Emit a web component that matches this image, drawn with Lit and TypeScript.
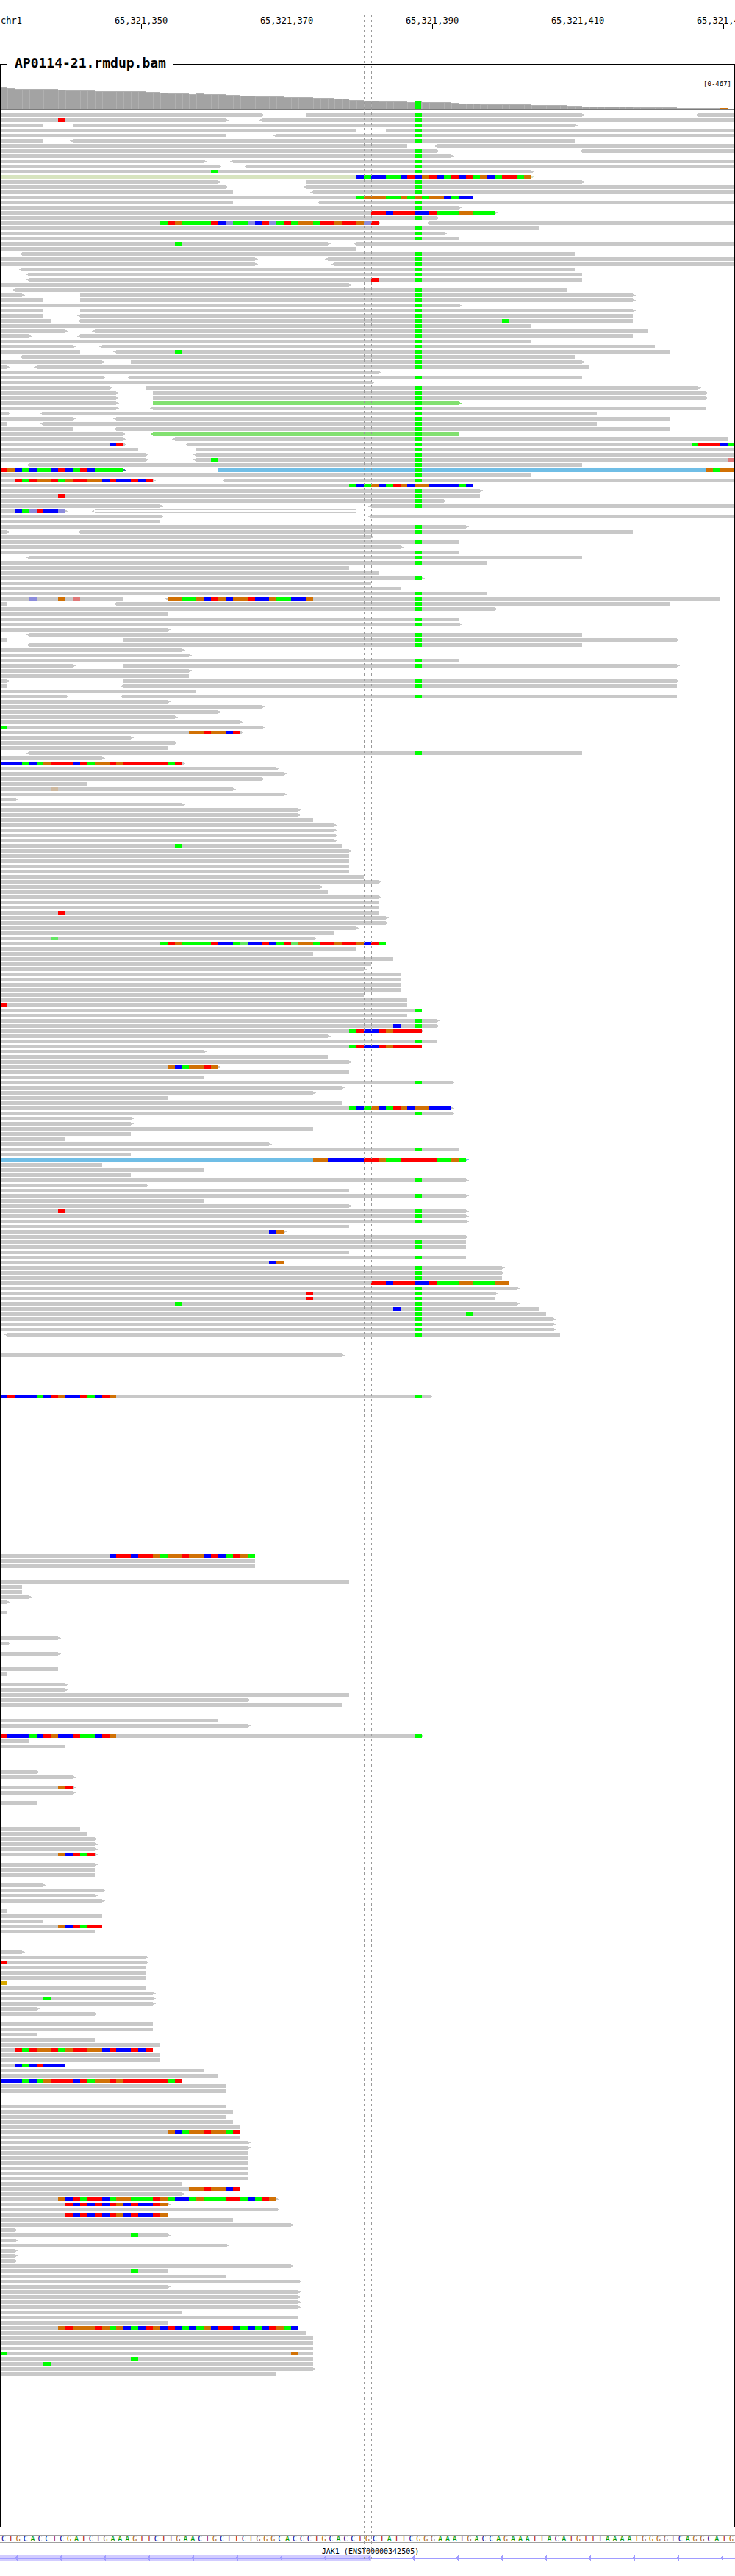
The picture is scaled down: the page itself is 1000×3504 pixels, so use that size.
import { LitElement, html, svg, css } from "lit";
import { customElement, property, state } from "lit/decorators.js";

/** Number of bases that fit across the window. */
const VISIBLE_BASES = 1000 / 9.9;
const ROW_PITCH = 7;
const READ_HEIGHT = 5;
const TOP_GAP = 5;

const SEQUENCE =
  "CTGCACCTCGATCTGAAAGTTCTTGAACTGCTTCTGGGCACCCTGCACCT" +
  "GCTATTCGGGAAATGACCAGAAATTACATGTTTAAAATGGGGTCAGGCATG";

const TICKS = [
  { base: 19, label: "65,321,350" },
  { base: 39, label: "65,321,370" },
  { base: 59, label: "65,321,390" },
  { base: 79, label: "65,321,410" },
  { base: 99, label: "65,321,430" },
];

/** Coverage as [number of bases, bar height in pixels]. */
const COVERAGE: [number, number][] = [
  [1, 29], [1, 28], [6, 27], [1, 26], [4, 25], [7, 24], [2, 23], [1, 22],
  [3, 21], [1, 20], [1, 21], [3, 20], [2, 19], [2, 18], [4, 17], [4, 16],
  [3, 15], [2, 14], [2, 12], [2, 11], [4, 10], [1, 9], [1, 10], [4, 9],
  [1, 8], [3, 7], [7, 6], [5, 5], [2, 4], [7, 3], [6, 2], [7, 1],
];

const SNP_BASE = 57;

/** Lower case letters are base calls of low quality. */
const BASE_COLORS: Record<string, string> = {
  A: "#00ff00", C: "#0000ff", G: "#d17105", T: "#ff0000",
  a: "#64e664", c: "#8c8cdc", g: "#cdb89f", t: "#e07878",
};

const READ_COLORS: Record<string, string> = {
  "": "#c8c8c8", o: "#d7e4bf", g: "#82e070", s: "#70bee6", b: "#3f6f9f", y: "#d8a800",
};

/**
 * One line per row of the pileup.
 *   [<]start-end[>][color]  a read; < or > is its strand arrow, h is hollow
 *   position:BASES          mismatching bases
 *   *                       an A at the SNP position
 *   @n                      jumps to row n
 *   line xN                 the line is repeated N times
 */
const PILEUP = `
0-36> 42-80> <96-102 *
0-31> <36-102 * 8:T
0-6 10-79> *
0-49 53-102 *
0-31 <38-102 *
0-6 <10-79 *
0-56 <60-102
0-60> <80-102 *
0-62> *
0-28> <32-102 *
0-30> <34-102 *
0-73> * 29:A
0-73>o 49:CACCAACTCGTCATCTAGCATTAG
0-30> 42-80> *
0-31> <42-102 *
0-32 <43-102 *
0-65 49:AGGGAAGAGAGGCACC
0-32 <44-102 *
0-63> *
0-68> 51:TTCTTTCCTAAAGGAAA
0-60> *
0-52> <59-102 22:ATGAAAATCcAAcCTcATAGGATTGTTGcT
0-74 *
0-61> *
0-63 *
0-45> <49-102 24:A
0-49
<3-79 *
0-35> <45-102 *
0-35> <46-102 *
<3-79 *
<4-80 *
<4-80 * 51:T
0-48>
<2-78 *
0-3> 11-87> *
0-6 11-87> *
0-63> *
0-6 11-87> *
0-6 <11-87 *
0-7 <11-87 * 69:A
0-73 *
0-9> <13-89 *
0-4> <11-87 *
0-73 *
0-10> <14-90 *
0-11 <16-92 * 24:A
<3-79 *
0-14> 18-80> *
0-1> <5-81 *
0-52>
0-14> <18-80 *
0-51>
0-15> 20-96> *
0-16> 21-97> * x2
0-16> 21-63>g *
0-16> <21-97 *
0-1> <6-82 *
0-10> <16-92 *
0-1 <6-82 *
0-10 <16-92 *
0-17> <21-63g *
0-17> <24-100 *
0-17> <26-102 * 15:CT 95:ATTTCAA
0-19 27-102 *
0-20> <27-102 *
0-20> <27-102 * 29:A 100:tt
<4-80 *
0-17>b 30-102s * 0:TGCACAACTCATCAAAA 97:GAGGG
0-73 *
0-21> <31-102 * 2:TATGGTAGTTGGCTCCTCT
0-65 48:ACAGCATGCGGCCCCAC
0-66> *
0-66 * 8:T
0-61> *
0-22> <51-102 *
0-9> <13-49h 2:CAcTCCc
0-22> <51-102
0-22
0-64> *
0-1> <11-87 *
0-51>
0-63 *
0-55>
0-63 *
<4-80 *
0-67 *
0-48
0-52
0-58> *
0-51
0-55
0-67 *
0-17 <23-99 * 4:c 8:G 10:t 23:GGAAGCTGCGGTCCGAACCG
0-1 <16-92 *
0-68> *
0-23
0-63 *
0-63> *
0-23>
<4-80 *
0-1 17-93> *
<4-80 *
0-25>
0-26>
0-63 *
0-10> 17-93> *
0-26>
0-26
0-1> 17-93> *
0-1 <17-93 *
0-27
0-9> <17-93 *
0-23>
0-36>
0-30>
0-24>
0-33>
0-36> 0:A
0-33> 26:GGTGGCT
0-18>
0-24>
0-23
<4-80 *
0-14>
0-25> 0:CCCACAGTTTCTAGGTGTTTTTTAT
0-38>
0-39>
0-36>
0-12
0-32> 7:g
0-39>
0-2>
0-25>
0-41> x2
0-43
0-46> x4
0-47 24:A
0-48>
0-48 x4
0-50
0-52>
0-44>
0-45
0-52>
0-52 x2
0-52 8:T
0-53> x2
0-49>
0-46
0-43> 7:a
0-53 22:ATGAAAATCCAaCCTCATaGGATTGTTGCTA
0-49
0-43
0-54
0-51
0-50>
0-55 x4
0-50
0-56
0-56 0:T
0-58 *
0-56
0-60> *
0-60> * 54:C
0-58> 48:ATCCTGTTTT
0-45>
0-60 *
0-58 48:ATCCTGTTTT
0-28>
0-45
0-48>
0-30> 23:GCAGGTG
0-48
0-28
0-62> *
0-47>
0-43>
0-23
0-47
0-62> 48:ACAGCATGCGGCCC
0-62> *
0-18> x2
0-43
0-18
0-9
0-37>
0-63 *
0-18
0-64>s 43:GGCCCCCTTGAATTTTTAAGA
0-14
0-28
0-18
0-64> *
0-20>
0-48
0-64> *
0-28
0-48>
0-64> * 8:T
0-64> * x2
0-48
0-39> 37:CG
0-64>
0-64 * x2
0-48
0-64 *
0-39 37:CG
0-69> * x2
0-69 *
0-70 51:TTCTTTCCTAAAGGAAAGG
0-71> *
0-68> * 42:T
0-68 * 42:T
0-71> * 24:A
0-74 * 54:C
0-75 * 64:A
0-76> * x3
<1-77 *
@241 0-47>
@249 0-59> * 0:CTCCCACTGCCTACTG
@280 0-35 15:CTTCTTGAGGTGGCTCATGA
0-35 x2
@285 0-48
0-3 x2
0-4>
0-1>
@291 0-1
@296 0-8>
0-1>
@299 0-8>
@302 0-8
0-1
@305 0-9> x2
0-48
0-34>
0-47
@312 0-30
0-34>
@315 0-58> * 0:TCCCACTGCCTAACTG
0-4
0-9
@322 0-5>
0-10>
@325 0-10> 8:GT
0-10>
@328 0-5
@333 0-11
0-12
0-13> x3
0-13> 8:GCTAT
@340 0-13>
0-13 x2
@344 0-6>
0-14>
0-13>
0-14>
@349 0-1
0-14
0-6
0-14 8:GCTATT
0-13
@357 0-3>
0-20>
0-20> 0:T
0-20 x3
0-1y
0-20
0-21>
0-21> 6:A
0-21>
0-5>
0-13>
@371 0-21 x2
0-5
0-13
0-22
0-21 2:TATGGTAGTTGGCTCCTCT
0-22 x2
0-9 2:CACTCCC
0-28
0-30
0-25 0:CCCACAGTTTCTAGGTGTTTTTTAT
0-31 x2
@387 0-31
0-32
0-31
0-32
0-33
0-33 23:GCAGGTGGAT
0-33
0-34> x2
0-34 x6
0-25
0-33 26:GGTGGCT
0-25>
0-38> 8:GCTATTCAGGAAATGACCAGAAATTACATG
0-23> 9:TCTCTCTGCTCCTG
0-38>
0-23 9:TCTCTCTGCTCCTG
0-32
0-40>
0-2>
0-23> 18:A
0-2>
0-31>
0-2> x3
0-40>
0-23 18:A
0-31
0-41>
0-23>
0-41> x4
0-25
0-41
0-23
0-41 8:GTGGGTGAGCACTGCTCACAGCTTCACACTGAC
0-42
0-43 x3
0-43 0:A 40:G
0-43 18:A
0-43 6:A
0-43>
0-38
`;

interface Read {
  start: number;
  end: number;
  left: boolean;
  right: boolean;
  color: string;
  hollow: boolean;
}

interface Row {
  index: number;
  reads: Read[];
  mismatches: { pos: number; base: string }[];
}

function parsePileup(source: string): Row[] {
  const rows: Row[] = [];
  let index = 0;
  for (const line of source.trim().split("\n")) {
    const reads: Read[] = [];
    const mismatches: { pos: number; base: string }[] = [];
    let repeat = 1;
    for (const token of line.split(" ")) {
      if (token.startsWith("@")) index = Number(token.slice(1));
      else if (token.startsWith("x")) repeat = Number(token.slice(1));
      else if (token === "*") mismatches.push({ pos: SNP_BASE, base: "A" });
      else if (token.includes(":")) {
        const [pos, bases] = token.split(":");
        [...bases].forEach((base, i) => mismatches.push({ pos: Number(pos) + i, base }));
      } else {
        const m = /^(<?)(\d+)-(\d+)(>?)([a-z]?)$/.exec(token)!;
        reads.push({
          start: Number(m[2]),
          end: Number(m[3]),
          left: m[1] !== "",
          right: m[4] !== "",
          color: READ_COLORS[m[5]] ?? READ_COLORS[""],
          hollow: m[5] === "h",
        });
      }
    }
    for (let i = 0; i < repeat; i++) rows.push({ index: index++, reads, mismatches });
  }
  return rows;
}

const ROWS = parsePileup(PILEUP);

/** Pixel position of the left edge of a base. */
const scaleFor = (width: number) => (base: number) =>
  Math.round((base * width) / VISIBLE_BASES);

@customElement("genome-ruler")
class GenomeRuler extends LitElement {
  @property({ type: Number }) width = 1000;

  static styles = css`
    :host { display: block; padding-top: 20px; }
    svg { display: block; width: 100%; height: 20px; overflow: hidden; }
    text { font: 12px "DejaVu Sans Mono", monospace; fill: #000; }
    .middle { text-anchor: middle; }
    rect { shape-rendering: crispEdges; }
  `;

  render() {
    const x = scaleFor(this.width);
    return html`<svg role="img" aria-label="Position on chr1">
      <text x="1" y="12">chr1</text>
      ${TICKS.map((t) => {
        const px = x(t.base + 0.5) - 1;
        return svg`<text class="middle" x=${px} y="12">${t.label}</text>
          <rect x=${px} y="12" width="1" height="7"></rect>`;
      })}
      <rect x="0" y="19" width="100%" height="1"></rect>
    </svg>`;
  }
}

@customElement("coverage-plot")
class CoveragePlot extends LitElement {
  @property({ type: Number }) width = 1000;

  static styles = css`
    :host { display: block; }
    svg { display: block; width: 100%; height: 30px; shape-rendering: crispEdges; }
    .edge { fill: #b0b0b0; }
    .bar { fill: #a3a3a3; }
    .snp { fill: #00ff00; }
    .mixed { fill: #d17105; }
    .axis { fill: #7a7a7a; }
  `;

  render() {
    const x = scaleFor(this.width);
    const heights = COVERAGE.flatMap(([n, h]) => Array<number>(n).fill(h));
    return html`<svg aria-hidden="true">
      <g transform="translate(-1 0)">
        ${heights.map((h, i) => {
          const left = x(i);
          const w = x(i + 1) - left;
          if (i === SNP_BASE) {
            return svg`<rect class="edge" x=${left} y=${29 - h} width=${w} height=${h}></rect>
              <rect class="snp" x=${left} y=${29 - h} width=${w - 1} height=${h}></rect>`;
          }
          return svg`<rect class="edge" x=${left} y=${29 - h} width=${w} height=${h}></rect>
            <rect class="bar" x=${left + 1} y=${30 - h} width=${w - 1} height=${h - 1}></rect>`;
        })}
        <rect class="axis" x="0" y="29" width="101%" height="1"></rect>
        <rect class="mixed" x=${x(99)} y="28" width=${x(1)} height="1"></rect>
      </g>
    </svg>`;
  }
}

@customElement("read-pileup")
class ReadPileup extends LitElement {
  @property({ type: Number }) width = 1000;

  static styles = css`
    :host { display: block; padding-bottom: 203px; }
    svg { display: block; width: 100%; overflow: hidden; shape-rendering: crispEdges; }
    .hollow { fill: #fff; }
  `;

  private read(r: Read, y: number, x: (b: number) => number) {
    const a = x(r.start);
    const b = x(r.end);
    const left = r.left
      ? svg`<path fill=${r.color} d="M${a} ${y + 1}h-2v1h-2v1h2v1h2z"></path>`
      : null;
    const right = r.right
      ? svg`<path fill=${r.color} d="M${b} ${y + 1}h2v1h2v1h-2v1h-2z"></path>`
      : null;
    const core = r.hollow
      ? svg`<rect class="hollow" x=${a - 1} y=${y + 1} width=${b - a} height=${READ_HEIGHT - 2}></rect>`
      : null;
    return svg`${left}${right}
      <rect fill=${r.color} x=${a} y=${y} width=${b - a} height=${READ_HEIGHT}></rect>${core}`;
  }

  render() {
    const x = scaleFor(this.width);
    const height = TOP_GAP + (ROWS[ROWS.length - 1].index + 1) * ROW_PITCH;
    return html`<svg height=${height} role="img" aria-label="Aligned reads">
      <g transform="translate(-1 0)">
        ${ROWS.map((row) => {
          const y = TOP_GAP + row.index * ROW_PITCH;
          return svg`<g>
            ${row.reads.map((r) => this.read(r, y, x))}
            ${row.mismatches.map(
              (m) => svg`<rect fill=${BASE_COLORS[m.base]} x=${x(m.pos)} y=${y}
                width=${x(m.pos + 1) - x(m.pos)} height=${READ_HEIGHT}></rect>`
            )}
          </g>`;
        })}
      </g>
    </svg>`;
  }
}

@customElement("reference-sequence")
class ReferenceSequence extends LitElement {
  static styles = css`
    :host {
      display: grid;
      grid-template-columns: repeat(101, minmax(0, 1fr));
      height: 9px;
      border-top: 1px solid #a0a0a0;
      border-bottom: 1px solid #a0a0a0;
      font: 10px/9px "DejaVu Sans Mono", monospace;
      text-align: center;
    }
    .A { color: #009600; }
    .C { color: #000096; }
    .G { color: #a85a00; }
    .T { color: #a80000; }
  `;

  render() {
    return [...SEQUENCE].map((b) => html`<span class=${b}>${b}</span>`);
  }
}

@customElement("gene-track")
class GeneTrack extends LitElement {
  @property({ type: Number }) width = 1000;

  static styles = css`
    :host { display: block; }
    svg { display: block; width: 100%; height: 45px; shape-rendering: crispEdges; overflow: hidden; }
    text { font: 10px "DejaVu Sans Mono", monospace; text-anchor: middle; }
    .exon { fill: #d2ccff; }
    .intron { fill: #a09cff; }
  `;

  render() {
    const x = scaleFor(this.width);
    const arrows: number[] = [];
    for (let px = 21; px < this.width; px += 60) arrows.push(px);
    return html`<svg role="img" aria-label="JAK1 gene, reverse strand">
      <rect class="exon" x="0" y="16" width=${x(51)} height="9"></rect>
      <rect class="intron" x="0" y="20" width="100%" height="2"></rect>
      ${arrows.map(
        (px) => svg`<path class="intron" d="M${px - 1} 20h1v-1h1v-1h1v-1h1v7h-1v-1h-1v-1h-1v-1h-1z"></path>`
      )}
      <text x=${x(51) - 1} y="15">JAK1 (ENST00000342505)</text>
    </svg>`;
  }
}

@customElement("app-root")
class AppRoot extends LitElement {
  @state() private width = window.innerWidth;

  static styles = css`
    :host {
      display: block;
      position: relative;
      overflow: hidden;
      background: #fff;
      color: #000;
      font-family: "DejaVu Sans Mono", monospace;
    }
    .track {
      display: flow-root;
      margin: 48px 0 10px;
      border: 1px solid #000;
      border-top: none;
    }
    .title {
      display: flex;
      align-items: center;
      margin: -12px -1px 0;
      height: 23px;
      font-size: 18px;
      font-weight: bold;
      line-height: 19px;
    }
    .title::before,
    .title::after {
      content: "";
      height: 1px;
      background: #000;
    }
    .title::before { width: 10px; }
    .title::after { flex: 1; }
    .name { padding: 0 10px 4px; }
    .range {
      padding: 11px 4px 0 0;
      font-size: 9px;
      line-height: 9px;
      text-align: right;
    }
    .guide {
      position: absolute;
      top: 20px;
      bottom: 23px;
      width: 1px;
      background: repeating-linear-gradient(#999 0 3px, transparent 3px 7px);
    }
    .guide-start { left: 49.5%; }
    .guide-end { left: 50.5%; }
  `;

  private onResize = () => {
    this.width = window.innerWidth;
  };

  connectedCallback() {
    super.connectedCallback();
    window.addEventListener("resize", this.onResize);
  }

  disconnectedCallback() {
    window.removeEventListener("resize", this.onResize);
    super.disconnectedCallback();
  }

  render() {
    return html`
      <genome-ruler .width=${this.width}></genome-ruler>
      <section class="track">
        <h2 class="title"><span class="name">AP0114-21.rmdup.bam</span></h2>
        <div class="range">[0-467]</div>
        <coverage-plot .width=${this.width}></coverage-plot>
        <read-pileup .width=${this.width}></read-pileup>
      </section>
      <reference-sequence></reference-sequence>
      <gene-track .width=${this.width}></gene-track>
      <div class="guide guide-start"></div>
      <div class="guide guide-end"></div>
    `;
  }
}
